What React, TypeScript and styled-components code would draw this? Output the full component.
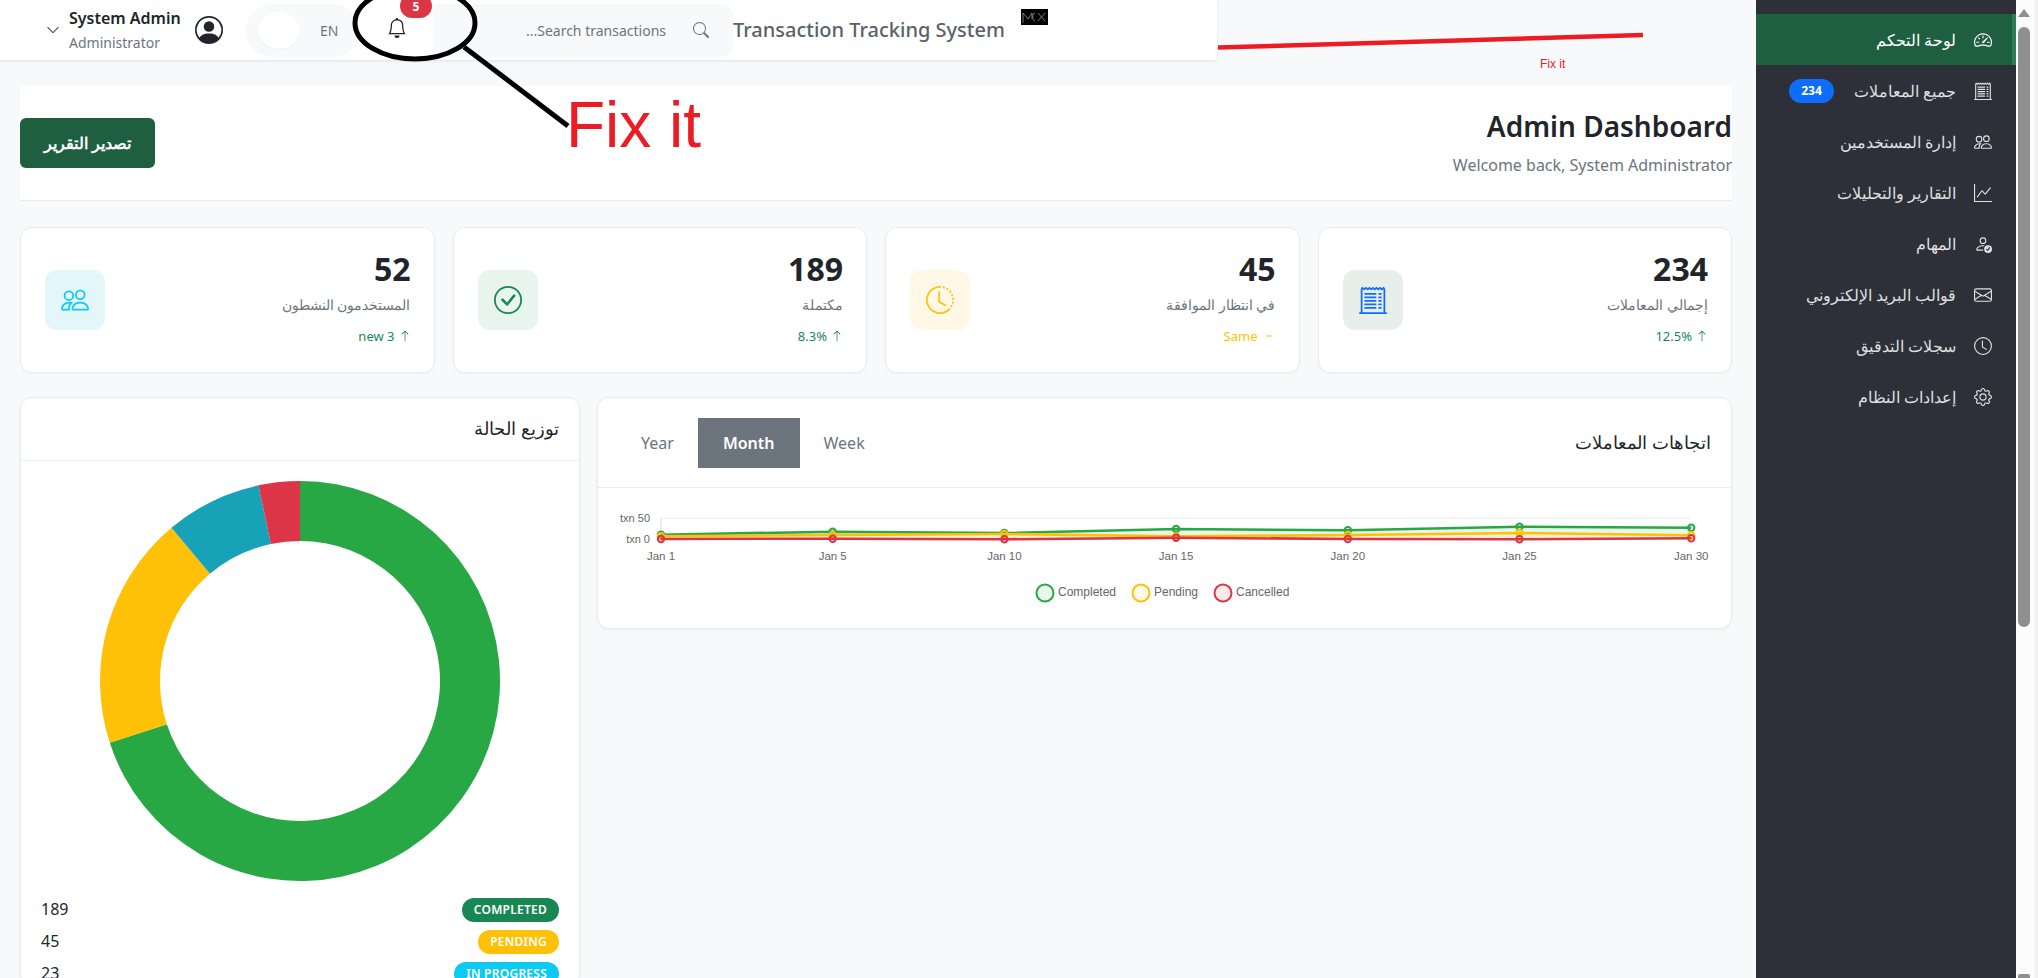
import React from 'react';
import styled, { createGlobalStyle } from 'styled-components';
import {
  BsArrowUp,
  BsBell,
  BsCheckCircle,
  BsChevronDown,
  BsClock,
  BsClockHistory,
  BsDash,
  BsEnvelope,
  BsGear,
  BsGraphUp,
  BsPeople,
  BsPersonCheck,
  BsPersonCircle,
  BsReceiptCutoff,
  BsSearch,
  BsSpeedometer2,
} from 'react-icons/bs';

const GlobalStyle = createGlobalStyle`
  html, body {
    margin: 0;
    height: 100%;
    overflow: hidden;
    background: #f8f9fa;
    font-family: "Noto Sans", "Open Sans", sans-serif;
    color: #212529;
  }
  * { box-sizing: border-box; }
`;

// Shell
const Shell = styled.div`
  display: flex;
  height: 978px;
  position: relative;
  overflow: hidden;
`;

const Main = styled.main`
  width: 1756px;
  flex: none;
  display: flex;
  flex-direction: column;
  overflow: hidden;
`;

const Content = styled.div`
  display: flex;
  flex-direction: column;
  padding: 26px 24px 0 20px;
`;

// Top bar
const TopBar = styled.header`
  width: 1217px;
  height: 60px;
  flex: none;
  display: flex;
  align-items: center;
  padding-left: 46px;
  background: #fff;
  box-shadow: 0 1px 3px rgba(0, 0, 0, 0.1);
`;

const UserMenu = styled.div`
  display: flex;
  align-items: center;
  gap: 9px;
  color: #343a40;
`;

const UserText = styled.div`
  display: flex;
  flex-direction: column;
  gap: 3px;
  width: 112px;
  margin-bottom: 2px;
`;

const UserName = styled.span`
  font-size: 16px;
  font-weight: 600;
  line-height: 24px;
  color: #212529;
  white-space: nowrap;
`;

const UserRole = styled.span`
  font-size: 14px;
  line-height: 20px;
  color: #6c757d;
`;

const Avatar = styled.span`
  display: flex;
  margin-left: 5px;
  color: #212529;
`;

const LangPill = styled.div`
  width: 114px;
  height: 53px;
  margin-left: 23px;
  padding-left: 12px;
  display: flex;
  align-items: center;
  gap: 20px;
  background: #f8f9fa;
  border-radius: 26px;
  font-size: 14px;
  color: #6c757d;
`;

const LangKnob = styled.span`
  width: 42px;
  height: 37px;
  border-radius: 50%;
  background: #fff;
  box-shadow: 0 1px 2px rgba(0, 0, 0, 0.05);
`;

const BellButton = styled.div`
  width: 73px;
  height: 100%;
  flex: none;
  position: relative;
  display: flex;
  align-items: center;
  padding: 0 0 4px 27px;
  color: #212529;
`;

const BellBadge = styled.span`
  position: absolute;
  left: 40px;
  top: -6px;
  width: 32px;
  height: 24px;
  display: flex;
  align-items: center;
  justify-content: center;
  border-radius: 12px;
  background: #dc3545;
  color: #fff;
  font-size: 12px;
  font-weight: 700;
`;

const SearchBox = styled.div`
  width: 300px;
  height: 53px;
  flex: none;
  display: flex;
  align-items: center;
  gap: 27px;
  padding-right: 24px;
  background: #f8f9fa;
  border-radius: 0 12px 12px 0;
  color: #6c757d;
  font-size: 14px;
  justify-content: flex-end;
`;

const SearchText = styled.span`
  direction: rtl;
`;

const AppTitle = styled.div`
  font-size: 20px;
  font-weight: 500;
  color: #5a6268;
  white-space: nowrap;
  width: 288px;
  flex: none;
  padding-bottom: 2px;
`;

const LogoMark = styled.svg`
  width: 27px;
  height: 16px;
  margin-bottom: 26px;
  flex: none;
`;

// Page heading
const PageHead = styled.section`
  height: 115px;
  display: flex;
  align-items: center;
  justify-content: space-between;
  background: #fff;
  border-bottom: 1px solid #e9ecef;
`;

const ExportButton = styled.div`
  width: 135px;
  height: 50px;
  display: flex;
  align-items: center;
  justify-content: center;
  background: #1e5f3f;
  border-radius: 6px;
  color: #fff;
  font-size: 16px;
  font-weight: 600;
`;

const HeadText = styled.div`
  text-align: right;
  padding-bottom: 2px;
`;

const PageTitle = styled.h1`
  margin: 0 0 9px;
  font-size: 28px;
  font-weight: 600;
  line-height: 36px;
`;

const PageSub = styled.p`
  margin: 0;
  font-size: 16px;
  line-height: 24px;
  color: #6c757d;
`;

// Stat cards
const StatGrid = styled.section`
  margin-top: 26px;
  display: grid;
  grid-template-columns: repeat(4, 1fr);
  gap: 18px;
`;

const StatCard = styled.article`
  height: 146px;
  display: flex;
  align-items: center;
  justify-content: space-between;
  padding: 0 23px 0 24px;
  background: #fff;
  border: 1px solid #e9ecef;
  border-radius: 12px;
  box-shadow: 0 1px 2px rgba(0, 0, 0, 0.03);
`;

const StatIcon = styled.div<{ $bg: string; $fg: string }>`
  width: 60px;
  height: 60px;
  display: flex;
  align-items: center;
  justify-content: center;
  border-radius: 12px;
  background: ${(p) => p.$bg};
  color: ${(p) => p.$fg};
`;

const StatBody = styled.div`
  display: flex;
  flex-direction: column;
  align-items: flex-end;
  padding-bottom: 7px;
`;

const StatValue = styled.div`
  font-size: 32px;
  font-weight: 700;
  line-height: 42px;
  margin-bottom: 5px;
`;

const StatLabel = styled.div`
  direction: rtl;
  font-size: 14px;
  line-height: 20px;
  color: #6c757d;
  margin-bottom: 11px;
`;

const StatTrend = styled.div<{ $color: string }>`
  display: flex;
  align-items: center;
  gap: 4px;
  font-size: 13px;
  line-height: 20px;
  color: ${(p) => p.$color};
`;

// Chart cards
const ChartRow = styled.section`
  margin-top: 24px;
  display: grid;
  grid-template-columns: 560px 1fr;
  gap: 17px;
  align-items: start;
`;

const Card = styled.article`
  background: #fff;
  border: 1px solid #e9ecef;
  border-radius: 12px;
  box-shadow: 0 1px 3px rgba(0, 0, 0, 0.05);
  overflow: hidden;
`;

const CardHead = styled.div<{ $height: number }>`
  height: ${(p) => p.$height}px;
  display: flex;
  align-items: center;
  justify-content: space-between;
  padding: 0 20px;
  border-bottom: 1px solid #e9ecef;
`;

const CardTitle = styled.h2`
  margin: 0 0 2px auto;
  direction: rtl;
  font-size: 18px;
  font-weight: 500;
  color: #212529;
`;

const Tabs = styled.div`
  display: flex;
  height: 50px;
  margin-left: -1px;
`;

const Tab = styled.div<{ $active?: boolean }>`
  padding: 0 ${(p) => (p.$active ? 25 : 24)}px;
  display: flex;
  align-items: center;
  justify-content: center;
  font-size: 16px;
  font-weight: ${(p) => (p.$active ? 600 : 400)};
  background: ${(p) => (p.$active ? '#6c757d' : 'transparent')};
  color: ${(p) => (p.$active ? '#fff' : '#6c757d')};
`;

const TrendSvg = styled.svg`
  display: block;
  width: 1133px;
  height: 139px;
  margin-top: 1px;
`;

const AxisText = styled.text`
  font-family: "Liberation Sans", Arial, sans-serif;
  font-size: 11px;
  fill: #666;
`;

const TickText = styled(AxisText)`
  font-size: 11.5px;
`;

const LegendText = styled(AxisText)`
  font-size: 12px;
`;

const DonutBody = styled.div`
  padding: 20px 20px 0;
  display: flex;
  flex-direction: column;
`;

const DonutSvg = styled.svg`
  display: block;
  width: 400px;
  height: 400px;
  margin: 0 auto 17px;
`;

const StatusList = styled.ul`
  list-style: none;
  margin: 0;
  padding: 0;
  display: flex;
  flex-direction: column;
  gap: 8px;
`;

const StatusRow = styled.li`
  height: 24px;
  display: flex;
  align-items: center;
  justify-content: space-between;
  font-size: 16px;
`;

const StatusCount = styled.span`
  padding-bottom: 2px;
`;

const StatusBadge = styled.span<{ $bg: string }>`
  height: 24px;
  display: flex;
  align-items: center;
  padding: 0 12px 2px;
  border-radius: 12px;
  background: ${(p) => p.$bg};
  color: #fff;
  font-size: 12px;
  font-weight: 600;
  letter-spacing: 0.25px;
`;

// Sidebar
const Sidebar = styled.nav`
  width: 260px;
  flex: none;
  padding-top: 14px;
  background: #2d3039;
  direction: rtl;
`;

const NavItem = styled.div<{ $active?: boolean }>`
  height: 51px;
  display: flex;
  align-items: center;
  gap: 18px;
  padding: 0 20px 0 33px;
  font-size: 16px;
  font-weight: ${(p) => (p.$active ? 500 : 400)};
  background: ${(p) => (p.$active ? '#1e5f3f' : 'transparent')};
  color: ${(p) => (p.$active ? '#fff' : 'rgba(255, 255, 255, 0.85)')};
  border-right: 4px solid ${(p) => (p.$active ? '#2e7d57' : 'transparent')};
`;

const NavBadge = styled.span`
  margin-right: auto;
  width: 45px;
  height: 24px;
  display: flex;
  align-items: center;
  justify-content: center;
  border-radius: 12px;
  background: #0d6efd;
  color: #fff;
  font-size: 12px;
  font-weight: 700;
`;

// Scrollbar
const ScrollTrack = styled.div`
  width: 22px;
  flex: none;
  display: flex;
  flex-direction: column;
  align-items: center;
  padding: 9px 3px 0 0;
  background: #fcfcfc;
  border-right: 3px solid #f1f1f1;
`;

const ScrollArrow = styled.span`
  width: 0;
  height: 0;
  border-left: 6px solid transparent;
  border-right: 6px solid transparent;
  border-bottom: 8px solid #8f8f8f;
`;

const ScrollThumb = styled.span`
  width: 12px;
  height: 600px;
  margin-top: 10px;
  border-radius: 6px;
  background: #8f8f8f;
`;

const ScrollEnd = styled.span`
  width: 12px;
  height: 4px;
  margin-top: auto;
  background: #8f8f8f;
  border-radius: 2px 2px 0 0;
`;

// Annotations drawn over the screenshot
const Markup = styled.svg`
  position: absolute;
  inset: 0;
  width: 2038px;
  height: 978px;
  pointer-events: none;
`;

const BigNote = styled.div`
  position: absolute;
  left: 566px;
  top: 88px;
  font-family: "Liberation Sans", Arial, sans-serif;
  font-size: 64px;
  line-height: 74px;
  color: #ed1c24;
`;

const SmallNote = styled.div`
  position: absolute;
  left: 1540px;
  top: 57px;
  font-family: "Liberation Sans", Arial, sans-serif;
  font-size: 12px;
  line-height: 15px;
  color: #ed1c24;
`;

const stats = [
  { value: '52', label: 'المستخدمون النشطون', trend: 'new 3', color: '#198754', bg: '#e3f6fa', fg: '#0dcaf0', icon: <BsPeople size={28} />, up: true },
  { value: '189', label: 'مكتملة', trend: '8.3%', color: '#198754', bg: '#e8f5ee', fg: '#198754', icon: <BsCheckCircle size={28} />, up: true },
  { value: '45', label: 'في انتظار الموافقة', trend: 'Same', color: '#ffc107', bg: '#fff8e6', fg: '#ffc107', icon: <BsClockHistory size={28} />, up: false },
  { value: '234', label: 'إجمالي المعاملات', trend: '12.5%', color: '#198754', bg: '#e8efeb', fg: '#0d6efd', icon: <BsReceiptCutoff size={28} />, up: true },
];

const navItems = [
  { label: 'لوحة التحكم', icon: <BsSpeedometer2 size={18} />, active: true },
  { label: 'جميع المعاملات', icon: <BsReceiptCutoff size={18} />, badge: '234' },
  { label: 'إدارة المستخدمين', icon: <BsPeople size={18} /> },
  { label: 'التقارير والتحليلات', icon: <BsGraphUp size={18} /> },
  { label: 'المهام', icon: <BsPersonCheck size={18} /> },
  { label: 'قوالب البريد الإلكتروني', icon: <BsEnvelope size={18} /> },
  { label: 'سجلات التدقيق', icon: <BsClock size={18} /> },
  { label: 'إعدادات النظام', icon: <BsGear size={18} /> },
];

const statuses = [
  { count: 189, label: 'COMPLETED', bg: '#198754' },
  { count: 45, label: 'PENDING', bg: '#ffc107' },
  { count: 23, label: 'IN PROGRESS', bg: '#0dcaf0' },
];

// chart coordinates are relative to the svg (card body origin 598, 489)
const xTicks = ['Jan 1', 'Jan 5', 'Jan 10', 'Jan 15', 'Jan 20', 'Jan 25', 'Jan 30'];
const tickX = (i: number) => 63 + i * 171.7;
const zeroY = 50;

const series = [
  { name: 'Completed', color: '#28a745', tint: 'rgba(40, 167, 69, 0.1)', ys: [45.7, 42.7, 44, 40, 41.3, 37.7, 38.7] },
  { name: 'Pending', color: '#ffc107', tint: 'rgba(255, 193, 7, 0.1)', ys: [47.3, 46, 45, 47.3, 46, 44, 46.3] },
  { name: 'Cancelled', color: '#dc3545', tint: 'rgba(220, 53, 69, 0.1)', ys: [50, 49.7, 50.3, 48.7, 50, 50.3, 49.3] },
];

const legend = [
  { name: 'Completed', color: '#28a745', tint: 'rgba(40, 167, 69, 0.1)', x: 447 },
  { name: 'Pending', color: '#ffc107', tint: 'rgba(255, 193, 7, 0.1)', x: 543 },
  { name: 'Cancelled', color: '#dc3545', tint: 'rgba(220, 53, 69, 0.1)', x: 625 },
];

const donut = [
  { value: 189, color: '#28a745' },
  { value: 51, color: '#ffc107' },
  { value: 21, color: '#17a2b8' },
  { value: 9, color: '#dc3545' },
];

const polar = (r: number, deg: number) => {
  const a = ((deg - 90) * Math.PI) / 180;
  return `${(200 + r * Math.cos(a)).toFixed(2)} ${(200 + r * Math.sin(a)).toFixed(2)}`;
};

const slicePath = (from: number, to: number) => {
  const big = to - from > 180 ? 1 : 0;
  return `M${polar(200, from)}A200 200 0 ${big} 1 ${polar(200, to)}L${polar(140, to)}A140 140 0 ${big} 0 ${polar(140, from)}Z`;
};

const TrendChart = () => (
  <TrendSvg viewBox="0 0 1133 139">
    <line x1={63} x2={1093} y1={29} y2={29} stroke="#e9e9e9" />
    <line x1={63} x2={1093} y1={zeroY} y2={zeroY} stroke="#e9e9e9" />
    <line x1={63} x2={63} y1={29} y2={zeroY} stroke="#ddd" />
    <AxisText x={52} y={33} textAnchor="end">txn 50</AxisText>
    <AxisText x={52} y={54} textAnchor="end">txn 0</AxisText>
    {xTicks.map((t, i) => (
      <TickText key={t} x={tickX(i)} y={71} textAnchor="middle">{t}</TickText>
    ))}
    {series.map((s) => {
      const pts = s.ys.map((y, i) => `${tickX(i)},${y}`).join(' ');
      return (
        <g key={s.name}>
          <polygon points={`${tickX(0)},${zeroY} ${pts} ${tickX(6)},${zeroY}`} fill={s.tint} />
          <polyline points={pts} fill="none" stroke={s.color} strokeWidth={2.6} />
          {s.ys.map((y, i) => (
            <circle key={i} cx={tickX(i)} cy={y} r={3.2} fill={s.tint} stroke={s.color} strokeWidth={2} />
          ))}
        </g>
      );
    })}
    {legend.map((l) => (
      <g key={l.name}>
        <circle cx={l.x} cy={104} r={8.5} fill={l.tint} stroke={l.color} strokeWidth={2} />
        <LegendText x={l.x + 13} y={107}>{l.name}</LegendText>
      </g>
    ))}
  </TrendSvg>
);

const StatusDonut = () => {
  const total = donut.reduce((sum, d) => sum + d.value, 0);
  let start = 0;
  return (
    <DonutSvg viewBox="0 0 400 400">
      {donut.map((d) => {
        const end = start + (d.value / total) * 360;
        const path = slicePath(start, end);
        start = end;
        return <path key={d.color} d={path} fill={d.color} />;
      })}
    </DonutSvg>
  );
};

const App: React.FC = () => {
  return (
    <>
      <GlobalStyle />
      <Shell>
        <Main>
          <TopBar>
            <UserMenu>
              <BsChevronDown size={14} />
              <UserText>
                <UserName>System Admin</UserName>
                <UserRole>Administrator</UserRole>
              </UserText>
              <Avatar><BsPersonCircle size={28} /></Avatar>
            </UserMenu>
            <LangPill>
              <LangKnob />
              EN
            </LangPill>
            <BellButton>
              <BsBell size={20} />
              <BellBadge>5</BellBadge>
            </BellButton>
            <SearchBox>
              <SearchText>Search transactions...</SearchText>
              <BsSearch size={16} />
            </SearchBox>
            <AppTitle>Transaction Tracking System</AppTitle>
            <LogoMark viewBox="0 0 27 16">
              <rect width="27" height="16" fill="#000" />
              <path d="M2 14V4L7 10L11 4V10M14 4C11 4 11 12 14 12M17 4L24 12M24 4L17 12" fill="none" stroke="#999" strokeWidth="0.8" />
            </LogoMark>
          </TopBar>
          <Content>
            <PageHead>
              <ExportButton dir="rtl">تصدير التقرير</ExportButton>
              <HeadText>
                <PageTitle>Admin Dashboard</PageTitle>
                <PageSub>Welcome back, System Administrator</PageSub>
              </HeadText>
            </PageHead>
            <StatGrid>
              {stats.map((s) => (
                <StatCard key={s.value}>
                  <StatIcon $bg={s.bg} $fg={s.fg}>{s.icon}</StatIcon>
                  <StatBody>
                    <StatValue>{s.value}</StatValue>
                    <StatLabel>{s.label}</StatLabel>
                    <StatTrend $color={s.color}>
                      {s.trend}
                      {s.up ? <BsArrowUp size={12} /> : <BsDash size={14} />}
                    </StatTrend>
                  </StatBody>
                </StatCard>
              ))}
            </StatGrid>
            <ChartRow>
              <Card>
                <CardHead $height={63}>
                  <CardTitle>توزيع الحالة</CardTitle>
                </CardHead>
                <DonutBody>
                  <StatusDonut />
                  <StatusList>
                    {statuses.map((s) => (
                      <StatusRow key={s.label}>
                        <StatusCount>{s.count}</StatusCount>
                        <StatusBadge $bg={s.bg}>{s.label}</StatusBadge>
                      </StatusRow>
                    ))}
                  </StatusList>
                </DonutBody>
              </Card>
              <Card>
                <CardHead $height={90}>
                  <Tabs>
                    <Tab>Year</Tab>
                    <Tab $active>Month</Tab>
                    <Tab>Week</Tab>
                  </Tabs>
                  <CardTitle>اتجاهات المعاملات</CardTitle>
                </CardHead>
                <TrendChart />
              </Card>
            </ChartRow>
          </Content>
        </Main>
        <Sidebar>
          {navItems.map((item) => (
            <NavItem key={item.label} $active={item.active}>
              {item.icon}
              {item.label}
              {item.badge && <NavBadge>{item.badge}</NavBadge>}
            </NavItem>
          ))}
        </Sidebar>
        <ScrollTrack>
          <ScrollArrow />
          <ScrollThumb />
          <ScrollEnd />
        </ScrollTrack>
        <Markup viewBox="0 0 2038 978">
          <ellipse cx={415} cy={23} rx={60} ry={36} fill="none" stroke="#000" strokeWidth={5} />
          <line x1={464} y1={47} x2={568} y2={126} stroke="#000" strokeWidth={5} />
          <line x1={1218} y1={47.5} x2={1643} y2={35} stroke="#ed1c24" strokeWidth={4.5} />
        </Markup>
        <BigNote>Fix it</BigNote>
        <SmallNote>Fix it</SmallNote>
      </Shell>
    </>
  );
};

export default App;
